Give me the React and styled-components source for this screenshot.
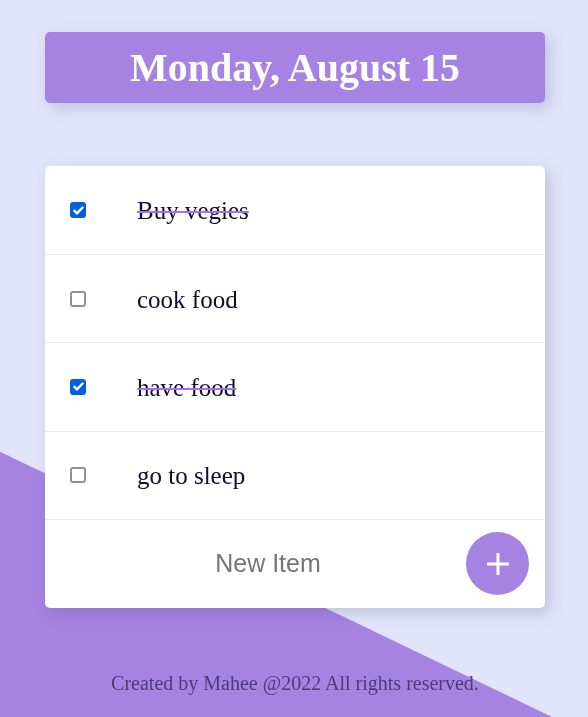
import React, { useState } from "react";
import styled, { createGlobalStyle } from "styled-components";

const GlobalStyle = createGlobalStyle`
    html, body {
        margin: 0;
        padding: 0;
    }
    body {
        background-color: #e1e4fa;
        font-family: "Liberation Serif", "Times New Roman", serif;
        min-height: 100vh;
        overflow: hidden;
    }
    body::before {
        content: "";
        position: fixed;
        inset: 0;
        background-color: #a683e3;
        clip-path: polygon(0 63%, 100% 102.4%, 0 102.4%);
        z-index: 0;
    }
`

const Page = styled.div`
    position: relative;
    z-index: 1;
    display: flex;
    flex-direction: column;
    align-items: center;
    padding: 32px 0 0 2px;
`

const Heading = styled.div`
    width: 500px;
    height: 71px;
    display: flex;
    align-items: center;
    justify-content: center;
    background-color: #a683e3;
    border-radius: 5px;
    box-shadow: 5px 5px 15px rgba(60, 60, 110, 0.2);
`

const Title = styled.h1`
    margin: 0;
    color: white;
    font-size: 40px;
    font-weight: bold;
    font-family: "Liberation Serif", "Times New Roman", serif;
`

const Card = styled.div`
    width: 500px;
    margin-top: 63px;
    background-color: white;
    border-radius: 5px;
    box-shadow: 5px 5px 15px rgba(60, 60, 110, 0.2);
`

const Row = styled.label`
    display: flex;
    align-items: center;
    height: 87.25px;
    padding-left: 25px;
    border-bottom: 1px solid #ececec;
    cursor: pointer;

    &:first-child {
        height: 88px;
    }
`

const HiddenCheck = styled.input`
    display: none;
`

const Box = styled.span`
    box-sizing: border-box;
    width: 16px;
    height: 16px;
    display: flex;
    align-items: center;
    justify-content: center;
    border-radius: 3px;
    border: 2px solid ${props => props.checked ? "#0060df" : "#8f8f9d"};
    background-color: ${props => props.checked ? "#0060df" : "white"};
`

const Label = styled.p`
    margin: 2px 0 0 51px;
    font-size: 25px;
    color: #0d0d30;
    text-decoration: ${props => props.done ? "line-through" : "none"};
    text-decoration-color: #a26ff0;
    text-decoration-thickness: 2px;
`

const Form = styled.form`
    display: flex;
    align-items: center;
    height: 88px;
    padding: 0 16px 0 25px;
`

const NewInput = styled.input`
    flex: 1;
    border: none;
    outline: none;
    background: transparent;
    text-align: center;
    font-size: 25px;
    font-family: "Liberation Sans", Arial, sans-serif;
    color: #333;

    &::placeholder {
        color: #757575;
    }
`

const AddButton = styled.button`
    width: 63px;
    height: 63px;
    border-radius: 50%;
    border: none;
    background-color: #a683e3;
    display: flex;
    align-items: center;
    justify-content: center;
    padding: 0;
    cursor: pointer;
`

const Footer = styled.footer`
    margin-top: 64px;
    font-size: 20px;
    color: #4c3d75;
    text-align: center;
`

const App = () => {

    // 할 일 목록
    const [items, setItems] = useState([
        { name: "Buy vegies", done: true },
        { name: "cook food", done: false },
        { name: "have food", done: true },
        { name: "go to sleep", done: false },
    ]);

    const toggle = (index) => {
        setItems(items.map((item, i) => i === index ? { ...item, done: !item.done } : item));
    };

    return (
        <>
            <GlobalStyle/>
            <Page>
                <Heading>
                    <Title>Monday, August 15</Title>
                </Heading>
                <Card>
                    {items.map((item, i) => (
                        <Row key={item.name}>
                            <HiddenCheck type="checkbox" checked={item.done} onChange={() => toggle(i)}/>
                            <Box checked={item.done}>
                                {item.done && (
                                    <svg width="11" height="11" viewBox="0 0 10 10">
                                        <path d="M1.3 5.3l2.3 2.3L8.7 2.3" stroke="white" strokeWidth="2.2" fill="none" strokeLinecap="round" strokeLinejoin="round"/>
                                    </svg>
                                )}
                            </Box>
                            <Label done={item.done}>{item.name}</Label>
                        </Row>
                    ))}
                    <Form onSubmit={e => e.preventDefault()}>
                        <NewInput type="text" placeholder="New Item"/>
                        <AddButton type="submit">
                            <svg width="24" height="24" viewBox="0 0 24 24">
                                <path d="M12 1v22M1 12h22" stroke="white" strokeWidth="3"/>
                            </svg>
                        </AddButton>
                    </Form>
                </Card>
                <Footer>Created by Mahee @2022 All rights reserved.</Footer>
            </Page>
        </>
    );
};

export default App;
